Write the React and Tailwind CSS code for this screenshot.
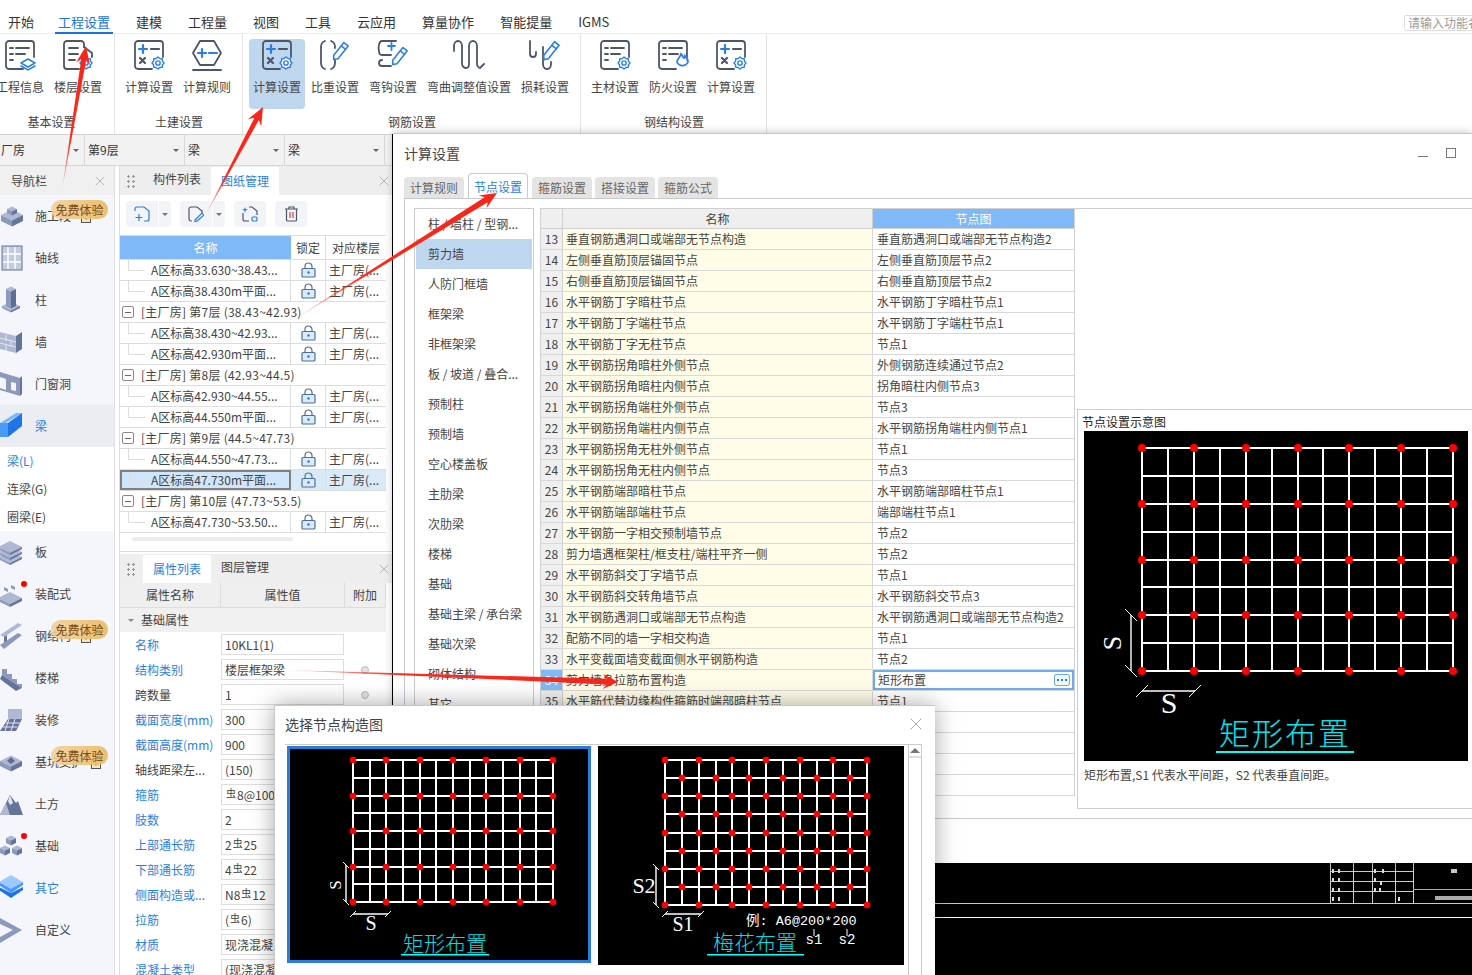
import { X } from "lucide-react";

const SLATE = "#4d5669";
const BLUE = "#2b7fe3";

const topTabs = ["工程设置", "建模", "工程量", "视图", "工具", "云应用", "算量协作", "智能提量", "IGMS"];

function gearPoints(x, y, r) {
  const pts = [];
  for (let i = 0; i < 16; i++) {
    const rad = i % 2 === 0 ? r : r * 0.8;
    const a = (i * Math.PI) / 8;
    pts.push(`${(x + rad * Math.cos(a)).toFixed(2)},${(y + rad * Math.sin(a)).toFixed(2)}`);
  }
  return pts.join(" ");
}

function Gear({ x, y, r = 5 }) {
  return (
    <g stroke={BLUE} fill="#fff" strokeWidth="1.4" strokeLinejoin="round">
      <polygon points={gearPoints(x, y, r)} />
      <circle cx={x} cy={y} r={r * 0.36} />
    </g>
  );
}

function CalcIcon() {
  return (
    <svg width="32" height="32" viewBox="0 0 32 32" fill="none" strokeLinecap="round">
      <path d="M19 30H5a3 3 0 0 1-3-3V5a3 3 0 0 1 3-3h22a3 3 0 0 1 3 3v13" stroke={SLATE} strokeWidth="1.8" />
      <path d="M6 10h8M10 6v8" stroke={BLUE} strokeWidth="2.2" />
      <path d="M18 10h8" stroke={SLATE} strokeWidth="2.2" />
      <path d="M7 19l5 5M12 19l-5 5" stroke={SLATE} strokeWidth="2.2" />
      <Gear x={25} y={24} r={6} />
    </svg>
  );
}

function RuleIcon() {
  return (
    <svg width="32" height="32" viewBox="0 0 32 32" fill="none" strokeLinecap="round">
      <path d="M9 2h14l7 12-7 12H9L2 14z" stroke={SLATE} strokeWidth="1.8" strokeLinejoin="round" />
      <path d="M7 14h8M11 10v8" stroke={BLUE} strokeWidth="2.2" />
      <path d="M18 14h8" stroke={BLUE} strokeWidth="2.2" />
      <path d="M2 31h28" stroke={SLATE} strokeWidth="1.8" />
    </svg>
  );
}

function DocLines() {
  return (
    <>
      <path d="M19 30H5a3 3 0 0 1-3-3V5a3 3 0 0 1 3-3h22a3 3 0 0 1 3 3v13" stroke={SLATE} strokeWidth="1.8" />
      <path d="M6 9h3M12 9h13M6 15h3M12 15h9M6 21h3" stroke={SLATE} strokeWidth="1.8" />
    </>
  );
}

function InfoIcon() {
  return (
    <svg width="32" height="32" viewBox="0 0 32 32" fill="none" strokeLinecap="round">
      <DocLines />
      <path d="M17 24l7-4 7 4-7 4z" fill="#fff" stroke={BLUE} strokeWidth="1.5" strokeLinejoin="round" />
      <path d="M17 27l7 4 7-4" stroke={BLUE} strokeWidth="1.5" />
    </svg>
  );
}

function FloorIcon() {
  return (
    <svg width="32" height="32" viewBox="0 0 32 32" fill="none" strokeLinecap="round">
      <path d="M22 8V5a3 3 0 0 0-3-3H5a3 3 0 0 0-3 3v22a3 3 0 0 0 3 3h12" stroke={SLATE} strokeWidth="1.8" />
      <path d="M7 9h9M7 15h9M7 21h6" stroke={SLATE} strokeWidth="1.8" />
      <path d="M22 8l8 6v4" stroke={SLATE} strokeWidth="1.8" />
      <Gear x={24} y={24} r={6} />
    </svg>
  );
}

function MaterialIcon() {
  return (
    <svg width="32" height="32" viewBox="0 0 32 32" fill="none" strokeLinecap="round">
      <DocLines />
      <Gear x={25} y={24} r={6} />
    </svg>
  );
}

function FireIcon() {
  return (
    <svg width="32" height="32" viewBox="0 0 32 32" fill="none" strokeLinecap="round">
      <DocLines />
      <path d="M20 23c0-3 3-4 4-8 2 2 2 4 3 4 1-1 1-2 1-2 2 2 3 4 3 6a6 6 0 0 1-11 0z" stroke={BLUE} strokeWidth="1.8" fill="#fff" />
    </svg>
  );
}

function Pencil({ dx = 0, dy = 0, s = 1 }) {
  return (
    <g transform={`translate(${dx} ${dy}) scale(${s})`} stroke={BLUE} strokeWidth="1.8" fill="none" strokeLinejoin="round">
      <path d="M2 18l12-15 5 4L7 22l-5 1z" />
      <path d="M11 7l5 4" />
    </g>
  );
}

function WeightIcon() {
  return (
    <svg width="32" height="32" viewBox="0 0 32 32" fill="none" strokeLinecap="round">
      <path d="M6 2C3 3 2 5 2 8v16c0 3 1 5 4 6" stroke={SLATE} strokeWidth="1.8" />
      <path d="M12 2c3 1 4 3 4 6v1M16 21v3c0 3-1 5-4 6" stroke={SLATE} strokeWidth="1.8" />
      <Pencil dx={13} dy={1} s={0.85} />
    </svg>
  );
}

function HookIcon() {
  return (
    <svg width="32" height="32" viewBox="0 0 32 32" fill="none" strokeLinecap="round">
      <path d="M5 2h14M5 16h9M5 2C2 2 1 8 2 12c0 3 1 4 3 4M14 27H5c-2 0-3-1-3-3s1-3 3-3" stroke={SLATE} strokeWidth="1.8" />
      <path d="M11 7h7M14.500 4v7" stroke={BLUE} strokeWidth="1.8" />
      <Pencil dx={14} dy={6} s={0.85} />
    </svg>
  );
}

function BendIcon() {
  return (
    <svg width="32" height="32" viewBox="0 0 32 32" fill="none" strokeLinecap="round">
      <path d="M1 12V7c0-3 2-5 4-5s4 2 4 5v18c0 2 2 4 4 4s3-2 3-4V7c0-3 2-5 4-5s4 2 4 5v18c0 2 2 4 3 4l4-4" stroke={SLATE} strokeWidth="1.8" />
    </svg>
  );
}

function LossIcon() {
  return (
    <svg width="32" height="32" viewBox="0 0 32 32" fill="none" strokeLinecap="round">
      <path d="M1 2v13c0 2 1 3 3 3s3-1 3-3v-2" stroke={SLATE} strokeWidth="1.8" />
      <path d="M14 8v17c0 2 1 5 4 5s4-3 4-5v-2" stroke={SLATE} strokeWidth="1.8" />
      <Pencil dx={13} dy={0} s={0.9} />
    </svg>
  );
}

const ribbon = [
  {
    label: "基本设置",
    width: "w-[115px]",
    inset: "-ml-[9px]",
    labelPad: "pr-[11px]",
    items: [
      { name: "工程信息", Icon: InfoIcon },
      { name: "楼层设置", Icon: FloorIcon },
    ],
  },
  {
    label: "土建设置",
    width: "w-[128px]",
    inset: "ml-[5px]",
    labelPad: "pl-px",
    items: [
      { name: "计算设置", Icon: CalcIcon },
      { name: "计算规则", Icon: RuleIcon },
    ],
  },
  {
    label: "钢筋设置",
    width: "w-[338px]",
    inset: "ml-[5px]",
    labelPad: "pl-px",
    items: [
      { name: "计算设置", Icon: CalcIcon, active: true },
      { name: "比重设置", Icon: WeightIcon },
      { name: "弯钩设置", Icon: HookIcon },
      { name: "弯曲调整值设置", Icon: BendIcon, wide: true },
      { name: "损耗设置", Icon: LossIcon },
    ],
  },
  {
    label: "钢结构设置",
    width: "w-[186px]",
    inset: "ml-[5px]",
    labelPad: "pl-px",
    items: [
      { name: "主材设置", Icon: MaterialIcon },
      { name: "防火设置", Icon: FireIcon },
      { name: "计算设置", Icon: CalcIcon },
    ],
  },
];

function RibbonButton({ item }) {
  const { Icon } = item;
  return (
    <div className={`${item.wide ? "w-[94px]" : "w-[58px]"} px-px`}>
      <div className={`flex h-[70px] flex-col items-center rounded-[4px] ${item.active ? "bg-[#bfd6ef]" : ""}`}>
        <Icon />
        <span className="mt-[7px] whitespace-nowrap text-xs leading-[18px] text-[#444]">{item.name}</span>
      </div>
    </div>
  );
}

function TopBar() {
  return (
    <div className="flex h-[34px] items-end border-b border-[#eee] pl-2 text-[13px] text-[#333]">
      <span className="mr-6 pb-px leading-5">开始</span>
      <div className="flex flex-1 items-end gap-[26px]">
        {topTabs.map((t, i) => (
          <span
            key={t}
            className={
              i === 0
                ? "-mx-[3px] -mb-px border-b-2 border-[#1976e0] px-[3px] leading-5 text-[#1976e0]"
                : "pb-px leading-5"
            }
          >
            {t}
          </span>
        ))}
      </div>
      <div className="mb-[2px] -mr-[22px] h-[16px] w-[90px] shrink-0 overflow-hidden whitespace-nowrap rounded-[2px] border border-[#ddd] pl-[3px] text-xs leading-[14px] text-[#999]">
        请输入功能名称
      </div>
    </div>
  );
}

function Ribbon() {
  return (
    <div className="flex h-[100px] bg-white">
      {ribbon.map((g) => (
        <div key={g.label} className={`${g.width} flex shrink-0 flex-col overflow-hidden border-r border-[#e3e3e3]`}>
          <div className={`mt-[5px] flex ${g.inset}`}>
            {g.items.map((it) => (
              <RibbonButton key={it.name + g.label} item={it} />
            ))}
          </div>
          <div className={`mt-[3px] text-center text-xs leading-[20px] text-[#444] ${g.labelPad}`}>{g.label}</div>
        </div>
      ))}
    </div>
  );
}

function Caret() {
  return <span className="ml-auto mr-[5px] h-0 w-0 border-x-[3px] border-t-[3px] border-x-transparent border-t-[#666]" />;
}

function SelectorBar() {
  const cells = [
    { t: "厂房", w: "w-[85px]", p: "pl-px" },
    { t: "第9层", w: "w-[100px]", p: "pl-[3px]" },
    { t: "梁", w: "w-[100px]", p: "pl-[3px]" },
    { t: "梁", w: "w-[100px]", p: "pl-[3px]" },
  ];
  return (
    <div className="flex h-[32px] shrink-0 border-y border-[#d4d4d4] bg-[#f2f2f2] text-xs text-[#333]">
      {cells.map((c, i) => (
        <div key={i} className={`${c.w} ${c.p} flex items-center border-r border-[#d8d8d8]`}>
          {c.t}
          <Caret />
        </div>
      ))}
    </div>
  );
}

// nav icons, drawn as small isometric blocks
const GREY = ["#aeb8d2", "#8c99bb", "#65749b"];
const AZURE = ["#7db8fb", "#4a98f7", "#1f74e8"];

function cube(cx, cy, s, h, c = GREY) {
  return (
    <g key={`${cx}-${cy}`}>
      <polygon points={`${cx},${cy - s / 2} ${cx + s},${cy} ${cx},${cy + s / 2} ${cx - s},${cy}`} fill={c[0]} />
      <polygon points={`${cx - s},${cy} ${cx},${cy + s / 2} ${cx},${cy + s / 2 + h} ${cx - s},${cy + h}`} fill={c[1]} />
      <polygon points={`${cx + s},${cy} ${cx},${cy + s / 2} ${cx},${cy + s / 2 + h} ${cx + s},${cy + h}`} fill={c[2]} />
    </g>
  );
}

const navIcons = {
  block: () => (
    <>
      {cube(10, 14, 11, 6)}
      {cube(10, 8, 5, 4)}
    </>
  ),
  grid: () => (
    <>
      <rect x="0" y="3" width="20" height="24" fill="#c3cbe0" stroke="#65749b" strokeWidth="1" />
      <path d="M6 4v22M13 4v22M1 11h18M1 19h18" stroke="#fff" strokeWidth="1.4" />
    </>
  ),
  column: () => (
    <>
      {cube(9, 21, 9, 2)}
      {cube(9, 4, 5, 17, ["#aeb8d2", "#8c99bb", "#5d6d96"])}
    </>
  ),
  wall: () => (
    <>
      <polygon points="-2,5 14,9 14,26 -2,22" fill="#aeb8d2" />
      <polygon points="14,9 20,5 20,22 14,26" fill="#65749b" />
      <path d="M-2 11l16 4M-2 16l16 4M4 8v6M9 14v6M4 18v6" stroke="#e2e6f0" strokeWidth="1" />
    </>
  ),
  door: () => (
    <>
      <polygon points="-2,3 18,9 18,27 -2,21" fill="#8c99bb" />
      <polygon points="18,9 20,7 20,25 18,27" fill="#65749b" />
      <polygon points="-2,8 4,10 4,21 -2,19" fill="#f3f5fa" />
      <polygon points="9,13 14,14 14,22 9,21" fill="#f3f5fa" />
    </>
  ),
  beam: () => (
    <>
      <polygon points="-2,12 14,2 20,2 4,12" fill={AZURE[0]} />
      <polygon points="-2,12 6,12 6,26 -2,26" fill={AZURE[1]} />
      <polygon points="6,12 20,2 20,15 6,26" fill={AZURE[2]} />
    </>
  ),
  slab: () => (
    <>
      {cube(8, 20, 12, 2)}
      {cube(8, 15, 12, 2)}
      {cube(8, 10, 12, 2)}
    </>
  ),
  precast: () => (
    <>
      {cube(8, 19, 12, 3)}
      <polygon points="2,8 6,10 6,13 2,11" fill="#8c99bb" />
      <polygon points="9,6 13,8 13,11 9,9" fill="#8c99bb" />
    </>
  ),
  steel: () => (
    <>
      <polygon points="-2,14 16,2 20,4 2,16" fill="#aeb8d2" />
      <polygon points="2,16 5,14 5,24 2,26" fill="#65749b" />
      <polygon points="-2,24 16,12 20,14 2,28" fill="#8c99bb" />
    </>
  ),
  stairs: () => (
    <>
      <polygon points="0,6 5,6 5,11 10,11 10,16 15,16 15,21 20,21 20,25 0,12" fill="#8c99bb" />
      <polygon points="0,12 20,25 14,28 -2,16" fill="#65749b" />
    </>
  ),
  deco: () => (
    <>
      <polygon points="6,4 20,4 20,14 6,14" fill="#aeb8d2" />
      <polygon points="6,14 20,14 14,26 -2,26" fill="#65749b" />
      <path d="M4 18h14M1 22h14M7 14l-4 12M13 14l-4 12" stroke="#e2e6f0" strokeWidth="1" />
    </>
  ),
  pit: () => (
    <>
      {cube(9, 14, 11, 5)}
      <polygon points="9,10 13,14 9,17 5,14" fill="#5d6d96" />
    </>
  ),
  earth: () => (
    <>
      <polygon points="-2,26 8,6 14,14 16,12 21,26" fill="#65749b" />
      <polygon points="-2,26 4,14 8,26" fill="#aeb8d2" />
      <polygon points="8,6 11,14 8,16 6,12" fill="#e2e6f0" />
    </>
  ),
  cubes: () => (
    <>
      {cube(9, 7, 5, 5)}
      {cube(3, 17, 5, 5)}
      {cube(15, 17, 5, 5)}
    </>
  ),
  layers: () => (
    <>
      <polygon points="9,20 21,14 21,17 9,25 -3,17 -3,14" fill="#1f74e8" />
      <polygon points="9,15 21,9 21,12 9,20 -3,12 -3,9" fill="#4a98f7" />
      <polygon points="9,2 21,9 9,16 -3,9" fill="#9ccafc" />
    </>
  ),
  custom: () => (
    <>
      <polygon points="-2,3 20,15 -2,28" fill="#8c99bb" />
      <polygon points="-2,9 11,15 -2,22" fill="#f3f5fa" />
    </>
  ),
};

const navRows = [
  { t: "施工段", i: "block", badge: true, lock: 85 },
  { t: "轴线", i: "grid" },
  { t: "柱", i: "column" },
  { t: "墙", i: "wall" },
  { t: "门窗洞", i: "door" },
  { t: "梁", i: "beam", active: true },
  { sub: true },
  { t: "板", i: "slab" },
  { t: "装配式", i: "precast", dot: true },
  { t: "钢结构", i: "steel", badge: true, lock: 85 },
  { t: "楼梯", i: "stairs" },
  { t: "装修", i: "deco" },
  { t: "基坑支护", i: "pit", badge: true, lock: 96 },
  { t: "土方", i: "earth" },
  { t: "基础", i: "cubes", dot: true },
  { t: "其它", i: "layers", blue: true },
  { t: "自定义", i: "custom" },
];

function CloseX() {
  return <X size={16} strokeWidth={1.2} className="text-[#aaa]" />;
}

function TrialBadge({ lock }) {
  return (
    <>
      <svg
        width="10"
        height="11"
        viewBox="0 0 10 11"
        className={`absolute top-[17px] ${lock === 85 ? "left-[81px]" : "left-[91px]"}`}
      >
        <rect x="0.5" y="2.500" width="9" height="8" fill="#f4e6c4" stroke="#555" />
        <circle cx="5" cy="6.500" r="1" fill="#555" />
      </svg>
      <div className="absolute left-[51px] top-[5px] h-[19px] w-[57px] rounded-full bg-gradient-to-r from-[#f3d09b]/90 to-[#e9b95f]/90 text-center text-xs leading-[19px] text-[#7a4b12]">
        免费体验
      </div>
    </>
  );
}

function NavBar() {
  return (
    <div className="flex w-[115px] shrink-0 flex-col border-r border-[#e2e2e2] bg-[#f4f6fb] text-xs">
      <div className="flex h-[29px] shrink-0 items-center justify-between bg-[#f0f0f0] pl-[11px] pr-[6px] text-[#444]">
        导航栏
        <CloseX />
      </div>
      {navRows.map((r, idx) => {
        if (r.sub) {
          return (
            <div key={idx} className="flex flex-col bg-white pl-[7px]">
              <span className="leading-[28px] text-[#2b7fe3]">梁(L)</span>
              <span className="leading-[28px] text-[#444]">连梁(G)</span>
              <span className="leading-[28px] text-[#444]">圈梁(E)</span>
            </div>
          );
        }
        const Ico = navIcons[r.i];
        return (
          <div key={idx} className={`relative flex h-[42px] shrink-0 items-center ${r.active ? "bg-[#ecedf2]" : ""}`}>
            <svg width="24" height="30" viewBox="-2 0 24 30" className="shrink-0 overflow-visible">
              <Ico />
            </svg>
            <span className={`ml-[11px] ${r.active || r.blue ? "text-[#2b7fe3]" : "text-[#444]"}`}>{r.t}</span>
            {r.dot && <span className="absolute left-[21px] top-[8px] h-[6px] w-[6px] rounded-full bg-[#f00]" />}
            {r.badge && <TrialBadge lock={r.lock} />}
          </div>
        );
      })}
    </div>
  );
}

function LockIcon() {
  return (
    <svg width="15" height="16" viewBox="0 0 15 16" fill="none">
      <path d="M4 7V4.500a3.500 3.500 0 0 1 7 0V7" stroke="#5d6d85" strokeWidth="1.2" />
      <rect x="1" y="6.500" width="13" height="8.500" rx="1" fill="#dcebfa" stroke="#4a6f9e" strokeWidth="1.2" />
      <circle cx="7.500" cy="10.500" r="1.300" fill="#2b7fe3" />
    </svg>
  );
}

const treeRows = [
  { n: "A区标高33.630~38.43..." },
  { n: "A区标高38.430m平面..." },
  { g: "[主厂房] 第7层 (38.43~42.93)" },
  { n: "A区标高38.430~42.93..." },
  { n: "A区标高42.930m平面..." },
  { g: "[主厂房] 第8层 (42.93~44.5)" },
  { n: "A区标高42.930~44.55..." },
  { n: "A区标高44.550m平面..." },
  { g: "[主厂房] 第9层 (44.5~47.73)" },
  { n: "A区标高44.550~47.73..." },
  { n: "A区标高47.730m平面...", sel: true },
  { g: "[主厂房] 第10层 (47.73~53.5)" },
  { n: "A区标高47.730~53.50..." },
];

function ToolBtn({ children, split }) {
  return (
    <div className="flex h-[26px] items-center rounded-[4px] bg-[#f3f4f8]">
      <div className="flex w-[32px] items-center justify-center">{children}</div>
      {split && (
        <div className="flex h-full w-[13px] items-center justify-center border-l border-white">
          <span className="h-0 w-0 border-x-[3px] border-t-[3px] border-x-transparent border-t-[#777]" />
        </div>
      )}
    </div>
  );
}

function TreeRow({ row }) {
  if (row.g) {
    return (
      <div className="flex h-[21px] items-center whitespace-nowrap border-b border-[#ddd] pl-[2px] text-xs tracking-[0.25px] text-[#444]">
        <span className="mr-[7px] flex h-[12px] w-[12px] items-center justify-center rounded-[2px] border border-[#888]">
          <span className="h-px w-[6px] bg-[#666]" />
        </span>
        {row.g}
      </div>
    );
  }
  return (
    <div className={`flex h-[21px] border-b border-[#ddd] text-xs text-[#444] ${row.sel ? "bg-[#d9e9f8]" : ""}`}>
      <div className={`relative w-[171px] shrink-0 truncate ${row.sel ? "border-2 border-[#808080] bg-[#cfe5fb] pl-[29px] leading-[15px]" : "border-r border-[#ddd] pl-[31px] leading-[20px]"}`}>
        <span className="absolute left-[8px] top-0 h-[11px] w-[17px] border-b border-l border-[#ddd]" />
        {row.n}
      </div>
      <div className="flex w-[35px] shrink-0 items-center justify-center border-r border-[#ddd]">
        <LockIcon />
      </div>
      <div className="flex-1 truncate pl-[3px] leading-[20px]">主厂房(...</div>
    </div>
  );
}

function DragDots() {
  return <span className="mb-[6px] ml-[6px] h-[15px] w-[10px] bg-[radial-gradient(circle,#999_1.1px,transparent_1.3px)] bg-[length:5px_5px]" />;
}

function ComponentPanel() {
  return (
    <div className="flex h-[386px] shrink-0 flex-col border-b border-[#ddd] bg-white">
      <div className="flex h-[29px] shrink-0 items-end bg-[#eee] text-xs">
        <DragDots />
        <span className="ml-[17px] pb-[6px] leading-5 text-[#444]">构件列表</span>
        <span className="ml-[10px] flex h-[28px] w-[68px] items-center justify-center bg-white text-[#2b7fe3]">图纸管理</span>
        <span className="mb-[6px] ml-auto">
          <CloseX />
        </span>
      </div>
      <div className="flex h-[40px] shrink-0 items-start gap-[9px] pl-[6px] pt-[6px]">
        <ToolBtn split>
          <svg width="16" height="16" viewBox="0 0 16 16" fill="none" stroke="#2b7fe3" strokeWidth="1.2">
            <path d="M1 5V3a2 2 0 0 1 2-2h7l5 4v8a2 2 0 0 1-2 2h-3" />
            <path d="M5 8v7M1.500 11.500h7" />
          </svg>
        </ToolBtn>
        <ToolBtn split>
          <svg width="16" height="16" viewBox="0 0 16 16" fill="none" stroke={SLATE} strokeWidth="1.2">
            <path d="M4 15H3a2 2 0 0 1-2-2V3a2 2 0 0 1 2-2h6l5 4v2" />
            <path d="M7 14l7-7 2 2-7 6-2 1z" stroke="#2b7fe3" />
          </svg>
        </ToolBtn>
        <ToolBtn>
          <svg width="16" height="16" viewBox="0 0 16 16" fill="none" stroke={SLATE} strokeWidth="1.2">
            <path d="M1 7v6a2 2 0 0 0 2 2h4M7 1h3l5 4v4" />
            <path d="M3 1l.7 2L6 3.700 3.700 4.500 3 7 2.300 4.500 0 3.700 2.300 3z" fill="#2b7fe3" stroke="none" />
            <rect x="10" y="11" width="5" height="4" rx="1" stroke="#2b7fe3" />
          </svg>
        </ToolBtn>
        <ToolBtn>
          <svg width="15" height="16" viewBox="0 0 15 16" fill="none" stroke={SLATE} strokeWidth="1.2">
            <path d="M1 3h13M5 3V1h5v2M2.500 3v11a1 1 0 0 0 1 1h8a1 1 0 0 0 1-1V3" />
            <path d="M6 6v6M9 6v6" stroke="#d9453d" />
          </svg>
        </ToolBtn>
      </div>
      <div className="flex h-[25px] w-[266px] shrink-0 border-y border-[#ddd] text-xs text-[#444]">
        <div className="flex w-[171px] items-center justify-center bg-[#7fb9f7] text-white">名称</div>
        <div className="flex w-[35px] items-center justify-center border-r border-[#ddd]">锁定</div>
        <div className="flex flex-1 items-center justify-center">对应楼层</div>
      </div>
      <div className="w-[266px] shrink-0">
        {treeRows.map((r, i) => (
          <TreeRow key={i} row={r} />
        ))}
      </div>
      <div className="ml-[12px] mt-[4px] h-[4px] w-[161px] shrink-0 rounded-full bg-[#ececec]" />
    </div>
  );
}

const props = [
  { k: "名称", v: "10KL1(1)", b: true },
  { k: "结构类别", v: "楼层框架梁", b: true, dot: true },
  { k: "跨数量", v: "1", dot: true },
  { k: "截面宽度(mm)", v: "300", b: true },
  { k: "截面高度(mm)", v: "900", b: true },
  { k: "轴线距梁左...", v: "(150)" },
  { k: "箍筋", v: ["", "8@100"], b: true },
  { k: "肢数", v: "2", b: true },
  { k: "上部通长筋", v: ["2", "25"], b: true },
  { k: "下部通长筋", v: ["4", "22"], b: true },
  { k: "侧面构造或...", v: ["N8", "12"], b: true },
  { k: "拉筋", v: ["(", "6)"], b: true },
  { k: "材质", v: "现浇混凝土", b: true },
  { k: "混凝土类型", v: "(现浇混凝土)", b: true },
];

function PropValue({ v }) {
  if (Array.isArray(v)) {
    return (
      <>
        {v[0]}
        <span className="relative -top-[2px] mx-px text-[10px]">虫</span>
        {v[1]}
      </>
    );
  }
  return v;
}

function PropertyPanel() {
  return (
    <div className="mt-[2px] flex min-h-0 flex-1 flex-col overflow-hidden bg-white text-xs">
      <div className="flex h-[29px] shrink-0 items-end bg-[#eee]">
        <DragDots />
        <span className="ml-[7px] flex h-[28px] w-[68px] items-center justify-center bg-white text-[#2b7fe3]">属性列表</span>
        <span className="ml-[10px] pb-[6px] leading-5 text-[#444]">图层管理</span>
        <span className="mb-[6px] ml-auto">
          <CloseX />
        </span>
      </div>
      <div className="flex h-[25px] w-[266px] shrink-0 border-b border-[#ddd] bg-[#efefef] text-[#444]">
        <div className="flex w-[101px] items-center justify-center border-r border-[#ddd]">属性名称</div>
        <div className="flex w-[124px] items-center justify-center border-r border-[#ddd]">属性值</div>
        <div className="flex flex-1 items-center justify-center border-r border-[#ddd]">附加</div>
      </div>
      <div className="flex h-[24px] w-[266px] shrink-0 items-center bg-[#f0f0f0] pl-[8px] text-[#444]">
        <span className="mr-[7px] h-0 w-0 border-x-[3px] border-t-[3px] border-x-transparent border-t-[#888]" />
        基础属性
      </div>
      {props.map((p) => (
        <div key={p.k} className="flex h-[25px] shrink-0 items-center">
          <span className={`w-[101px] truncate pl-[15px] ${p.b ? "text-[#2b7fe3]" : "text-[#444]"}`}>{p.k}</span>
          <div className="flex h-[21px] w-[123px] items-center overflow-hidden whitespace-nowrap border border-[#ddd] pl-[3px] text-[#444]">
            <PropValue v={p.v} />
          </div>
          {p.dot && <span className="ml-[17px] h-[8px] w-[8px] rounded-full border border-[#bbb] bg-[#e2e2e2]" />}
        </div>
      ))}
    </div>
  );
}

// rebar drawing shared by the preview and the picker
function range(a, b, n) {
  return Array.from({ length: n + 1 }, (_, i) => Math.round(a + ((b - a) * i) / n));
}

function RebarGrid({ x0, x1, y0, y1, stagger, sw = 2, r = 3 }) {
  const xs = range(x0, x1, 12);
  const ys = range(y0, y1, 8);
  return (
    <>
      {xs.map((x) => (
        <line key={x} x1={x} x2={x} y1={y0} y2={y1} stroke="#fff" strokeWidth={sw} shapeRendering="crispEdges" />
      ))}
      {ys.map((y) => (
        <line key={y} x1={x0} x2={x1} y1={y} y2={y} stroke="#fff" strokeWidth={sw} shapeRendering="crispEdges" />
      ))}
      {ys.map((y, j) =>
        xs.map((x, i) => {
          const on = j % 2 === 0 ? i % 2 === 0 : stagger && i % 2 === 1;
          return on ? <circle key={`${i}-${j}`} cx={x} cy={y} r={r} fill="#f00" /> : null;
        })
      )}
    </>
  );
}

function DimV({ x, y0, y1, t = 5 }) {
  return (
    <g stroke="#fff" strokeWidth="1">
      <line x1={x} x2={x} y1={y0} y2={y1} strokeWidth="1.400" />
      <line x1={x - t} x2={x + t} y1={y0 - t} y2={y0 + t} />
      <line x1={x - t} x2={x + t} y1={y1 - t} y2={y1 + t} />
    </g>
  );
}

function DimH({ y, x0, x1, t = 5 }) {
  return (
    <g stroke="#fff" strokeWidth="1">
      <line x1={x0} x2={x1} y1={y} y2={y} strokeWidth="1.400" />
      <line x1={x0 - t} x2={x0 + t} y1={y + t} y2={y - t} />
      <line x1={x1 - t} x2={x1 + t} y1={y + t} y2={y - t} />
    </g>
  );
}

const serif = "'Liberation Serif',serif";
const cjk = "'Noto Sans CJK SC',sans-serif";
const mono = "'Liberation Mono','Noto Sans CJK SC',monospace";

function PreviewPlate() {
  return (
    <svg width="384" height="330" viewBox="0 0 384 330" className="block bg-black">
      <RebarGrid x0={58} x1={369} y0={17} y1={240} r={4} />
      <DimV x={47} y0={184} y1={240} t={6} />
      <DimH y={260} x0={58} x1={111} t={6} />
      <text x="28" y="212" fill="#fff" fontFamily={serif} fontSize="26" textAnchor="middle" transform="rotate(-90 28 212) translate(0 9)">S</text>
      <text x="85" y="282" fill="#fff" fontFamily={serif} fontSize="30" textAnchor="middle">S</text>
      <text x="201" y="314" fill="#00e5ee" fontFamily={cjk} fontWeight="300" fontSize="31" letterSpacing="2" textAnchor="middle">矩形布置</text>
      <rect x="132" y="320" width="138" height="2" fill="#0ff" />
    </svg>
  );
}

function RectPlate() {
  return (
    <svg width="304" height="217" viewBox="0 0 304 217" className="block bg-black outline-[3px] -outline-offset-[3px] outline-[#2b7ddc]">
      <RebarGrid x0={66} x1={266} y0={14} y1={156} r={3.300} />
      <DimV x={59} y0={119} y1={156} t={3} />
      <DimH y={168} x0={66} x1={101} t={3} />
      <text x="48" y="139" fill="#fff" fontFamily={serif} fontSize="17" textAnchor="middle" transform="rotate(-90 48 139) translate(0 6)">S</text>
      <text x="84" y="184" fill="#fff" fontFamily={serif} fontSize="20" textAnchor="middle">S</text>
      <text x="158" y="205" fill="#00dfe8" fontFamily={cjk} fontWeight="300" fontSize="21" textAnchor="middle">矩形布置</text>
      <rect x="114" y="208" width="88" height="1.500" fill="#0ff" />
    </svg>
  );
}

function QuincunxPlate() {
  return (
    <svg width="306" height="219" viewBox="0 0 306 219" className="block bg-black">
      <RebarGrid x0={67} x1={269} y0={14} y1={159} stagger r={3.300} />
      <DimV x={58} y0={121} y1={159} t={3} />
      <DimH y={168} x0={67} x1={103} t={3} />
      <text x="46" y="147" fill="#fff" fontFamily={serif} fontSize="22" textAnchor="middle">S2</text>
      <text x="85" y="185" fill="#fff" fontFamily={serif} fontSize="20" textAnchor="middle">S1</text>
      <text x="148" y="179" fill="#fff" fontFamily={mono} fontSize="13.500">例: A6@200*200</text>
      <path d="M216 183v7M249 183v7" stroke="#fff" />
      <text x="216" y="198" fill="#fff" fontFamily={mono} fontSize="14" textAnchor="middle">s1</text>
      <text x="249" y="198" fill="#fff" fontFamily={mono} fontSize="14" textAnchor="middle">s2</text>
      <text x="157" y="204" fill="#00dfe8" fontFamily={cjk} fontWeight="300" fontSize="21" textAnchor="middle">梅花布置</text>
      <rect x="109" y="208" width="97" height="1.500" fill="#0ff" />
    </svg>
  );
}

const calcTabs = ["计算规则", "节点设置", "箍筋设置", "搭接设置", "箍筋公式"];

const sideList = [
  "柱 / 墙柱 / 型钢...",
  "剪力墙",
  "人防门框墙",
  "框架梁",
  "非框架梁",
  "板 / 坡道 / 叠合...",
  "预制柱",
  "预制墙",
  "空心楼盖板",
  "主肋梁",
  "次肋梁",
  "楼梯",
  "基础",
  "基础主梁 / 承台梁",
  "基础次梁",
  "砌体结构",
  "其它",
];

const nodeRows = [
  [13, "垂直钢筋遇洞口或端部无节点构造", "垂直筋遇洞口或端部无节点构造2"],
  [14, "左侧垂直筋顶层锚固节点", "左侧垂直筋顶层节点2"],
  [15, "右侧垂直筋顶层锚固节点", "右侧垂直筋顶层节点2"],
  [16, "水平钢筋丁字暗柱节点", "水平钢筋丁字暗柱节点1"],
  [17, "水平钢筋丁字端柱节点", "水平钢筋丁字端柱节点1"],
  [18, "水平钢筋丁字无柱节点", "节点1"],
  [19, "水平钢筋拐角暗柱外侧节点", "外侧钢筋连续通过节点2"],
  [20, "水平钢筋拐角暗柱内侧节点", "拐角暗柱内侧节点3"],
  [21, "水平钢筋拐角端柱外侧节点", "节点3"],
  [22, "水平钢筋拐角端柱内侧节点", "水平钢筋拐角端柱内侧节点1"],
  [23, "水平钢筋拐角无柱外侧节点", "节点1"],
  [24, "水平钢筋拐角无柱内侧节点", "节点3"],
  [25, "水平钢筋端部暗柱节点", "水平钢筋端部暗柱节点1"],
  [26, "水平钢筋端部端柱节点", "端部端柱节点1"],
  [27, "水平钢筋一字相交预制墙节点", "节点2"],
  [28, "剪力墙遇框架柱/框支柱/端柱平齐一侧", "节点2"],
  [29, "水平钢筋斜交丁字墙节点", "节点1"],
  [30, "水平钢筋斜交转角墙节点", "水平钢筋斜交节点3"],
  [31, "水平钢筋遇洞口或端部无节点构造", "水平钢筋遇洞口或端部无节点构造2"],
  [32, "配筋不同的墙一字相交构造", "节点1"],
  [33, "水平变截面墙变截面侧水平钢筋构造", "节点2"],
  [34, "剪力墙身拉筋布置构造", "矩形布置"],
  [35, "水平筋代替边缘构件箍筋时端部暗柱节点", "节点1"],
];

function NodeTable() {
  return (
    <div className="mt-[9px] h-[588px] w-[535px] shrink-0 border border-[#d0d0d0] text-xs text-[#444]">
      <div className="flex h-[20px] border-b border-[#d0d0d0]">
        <div className="w-[22px] border-r border-[#d0d0d0] bg-[#efefef]" />
        <div className="flex w-[310px] items-center justify-center border-r border-[#d0d0d0] bg-[#efefef]">名称</div>
        <div className="flex flex-1 items-center justify-center bg-[#7fb9f7] text-white">节点图</div>
      </div>
      {nodeRows.map(([no, name, node]) => {
        const sel = no === 34;
        return (
          <div key={no} className="flex h-[21px] border-b border-[#d8d8d8] leading-[20px]">
            <div className={`w-[22px] shrink-0 border-r border-[#d0d0d0] text-center ${sel ? "bg-[#7fb9f7] text-white" : "bg-[#efefef]"}`}>{no}</div>
            <div className="w-[310px] shrink-0 truncate border-r border-[#d8d8d8] bg-[#fffde8] pl-[3px]">{name}</div>
            {sel ? (
              <div className="flex flex-1 items-center justify-between border-2 border-[#6cace8] pl-[3px] pr-[2px] leading-[16px]">
                {node}
                <span className="flex h-[12px] w-[16px] items-center justify-center gap-[2px] rounded-[2px] border border-[#6cace8] bg-[#eef5fd]">
                  <span className="h-[2px] w-[2px] bg-[#2b7fe3]" />
                  <span className="h-[2px] w-[2px] bg-[#2b7fe3]" />
                  <span className="h-[2px] w-[2px] bg-[#2b7fe3]" />
                </span>
              </div>
            ) : (
              <div className="flex-1 truncate pl-[4px]">{node}</div>
            )}
          </div>
        );
      })}
      {[0, 1, 2, 3].map((i) => (
        <div key={i} className="h-[21px] border-b border-[#d8d8d8]" />
      ))}
    </div>
  );
}

function CalcWindow() {
  return (
    <div className="absolute left-[393px] top-[133px] flex h-[730px] w-[1079px] flex-col border-t border-[#c8c8c8] bg-white pl-[11px] text-xs shadow-[0_0_8px_rgba(0,0,0,0.25)]">
      <div className="flex h-[41px] shrink-0 items-center justify-between pb-[4px] text-sm text-[#444]">
        计算设置
        <div className="mr-[16px] flex items-center gap-[18px]">
          <span className="mt-[8px] h-px w-[10px] bg-[#777]" />
          <span className="h-[10px] w-[10px] border border-[#777]" />
        </div>
      </div>
      <div className="flex h-[23px] shrink-0 items-end gap-[3px]">
        {calcTabs.map((t) =>
          t === "节点设置" ? (
            <span key={t} className="-mb-px ml-px mr-px flex h-[26px] w-[60px] items-center justify-center rounded-t-[4px] border border-b-0 border-[#c8c8d0] bg-white text-[#2b7fe3]">
              {t}
            </span>
          ) : (
            <span key={t} className="flex h-[21px] w-[60px] items-center justify-center rounded-t-[4px] bg-[#e4e4e4] text-[#666]">
              {t}
            </span>
          )
        )}
      </div>
      <div className="flex h-[621px] shrink-0 border-y border-l border-[#c8c8d0]">
        <div className="ml-[9px] mr-[6px] mt-[9px] flex w-[120px] shrink-0 flex-col overflow-hidden border border-[#ccc] px-px text-[#444]">
          {sideList.map((s) => (
            <div key={s} className={`h-[30px] shrink-0 pl-[12px] leading-[30px] ${s === "剪力墙" ? "bg-[#bfd6ef]" : ""}`}>
              {s}
            </div>
          ))}
        </div>
        <NodeTable />
        <div className="mt-[9px] flex-1 border-t border-[#ccc]">
          <div className="ml-[2px] mt-[200px] h-[400px] border-y border-l border-[#ccc] pl-[6px]">
            <div className="-ml-[2px] h-[21px] pt-[4px] leading-[16px] text-[#222]">节点设置示意图</div>
            <PreviewPlate />
            <div className="mt-[6px] text-[#444]">矩形布置,S1 代表水平间距，S2 代表垂直间距。</div>
          </div>
        </div>
      </div>
    </div>
  );
}

function PickerWindow() {
  return (
    <div className="absolute left-[274px] top-[705px] flex h-[270px] w-[661px] flex-col border-l border-t border-[#c8c8c8] bg-white pl-[10px] shadow-[0_0_22px_rgba(0,0,0,0.35)]">
      <div className="flex h-[38px] shrink-0 items-center justify-between pb-[3px] text-sm text-[#444]">
        选择节点构造图
        <X size={20} strokeWidth={1} className="mr-[9px] text-[#999]" />
      </div>
      <div className="flex h-[232px] w-[637px] border-t border-[#ccc]">
        <div className="flex flex-1 gap-[7px] pl-[2px] pt-px">
          <RectPlate />
          <QuincunxPlate />
        </div>
        <div className="flex w-[14px] shrink-0 flex-col border-x border-[#ccc]">
          <div className="flex h-[13px] items-center justify-center border-b-2 border-[#ddd]">
            <span className="h-0 w-0 border-x-[5px] border-b-[5px] border-x-transparent border-b-[#777]" />
          </div>
        </div>
      </div>
    </div>
  );
}

function CadTitleBlock() {
  const rows = [862, 871, 881, 891, 903];
  const marks = [
    [1332, 872], [1338, 872], [1332, 881], [1338, 881], [1332, 891], [1338, 891], [1332, 900], [1338, 900],
    [1374, 872], [1382, 872], [1374, 881], [1380, 884], [1374, 891], [1379, 891], [1398, 900],
  ];
  return (
    <svg width="1472" height="112" viewBox="0 863 1472 112" className="block">
      <path d="M935 903.500H1472" stroke="#c8c8c8" />
      <path d="M935 917.500H1472" stroke="#fff" />
      {rows.map((y) => (
        <line key={y} x1="1330" x2="1413" y1={y + 0.5} y2={y + 0.5} stroke="#ccc" />
      ))}
      {[1330.500, 1353.500, 1372.500, 1395.500, 1413.500].map((x) => (
        <line key={x} x1={x} x2={x} y1="863" y2="903" stroke="#ccc" />
      ))}
      <line x1="1413" x2="1472" y1="889.500" y2="889.500" stroke="#aaa" />
      {marks.map(([x, y]) => (
        <rect key={`${x}-${y}`} x={x} y={y - 3} width="2" height="4" fill="#ddd" />
      ))}
      <rect x="1451" y="869" width="6" height="4" fill="#ccc" />
      <rect x="1435" y="896" width="37" height="4" fill="#aaa" />
    </svg>
  );
}

// annotation arrows, tapering from a thin tail to a solid head
function arrowPoints([tx, ty], [px, py], head, wing, shaft) {
  const len = Math.hypot(px - tx, py - ty);
  const ux = (px - tx) / len;
  const uy = (py - ty) / len;
  const nx = -uy;
  const ny = ux;
  const bx = px - ux * head;
  const by = py - uy * head;
  const sx = px - ux * head * 0.75;
  const sy = py - uy * head * 0.75;
  const pts = [
    [tx, ty],
    [sx + nx * shaft, sy + ny * shaft],
    [bx + nx * wing, by + ny * wing],
    [px, py],
    [bx - nx * wing, by - ny * wing],
    [sx - nx * shaft, sy - ny * shaft],
  ];
  return pts.map((p) => p.join(",")).join(" ");
}

const arrows = [
  { id: "a1", t: [62, 190], p: [86, 46], head: 18, wing: 7, shaft: 2.500 },
  { id: "a2", t: [205, 216], p: [263, 107], head: 18, wing: 7.500, shaft: 2.500 },
  { id: "a3", t: [293, 320], p: [497, 193], head: 17, wing: 7.500, shaft: 3 },
  { id: "a4", t: [283, 670], p: [618, 682], head: 15, wing: 7.500, shaft: 2.800 },
];

function Arrows() {
  return (
    <svg width="1472" height="975" className="pointer-events-none absolute inset-0">
      <defs>
        {arrows.map((a) => (
          <linearGradient key={a.id} id={a.id} gradientUnits="userSpaceOnUse" x1={a.t[0]} y1={a.t[1]} x2={a.p[0]} y2={a.p[1]}>
            <stop offset="0" stopColor="#ff2a1a" stopOpacity="0.15" />
            <stop offset="0.35" stopColor="#ff2a1a" />
            <stop offset="1" stopColor="#f6261a" />
          </linearGradient>
        ))}
      </defs>
      {arrows.map((a) => (
        <polygon key={a.id} points={arrowPoints(a.t, a.p, a.head, a.wing, a.shaft)} fill={`url(#${a.id})`} />
      ))}
    </svg>
  );
}

export default function App() {
  return (
    <div className="relative flex h-[975px] w-[1472px] flex-col overflow-hidden bg-white [font-family:'Noto_Sans_CJK_SC',sans-serif]">
      <TopBar />
      <Ribbon />
      <div className="flex min-h-0 flex-1">
        <div className="flex w-[392px] shrink-0 flex-col">
          <SelectorBar />
          <div className="flex min-h-0 flex-1">
            <NavBar />
            <div className="ml-[4px] flex w-[273px] shrink-0 flex-col border-l border-[#ddd] bg-white">
              <ComponentPanel />
              <PropertyPanel />
            </div>
          </div>
        </div>
        <div className="flex flex-1 flex-col justify-end overflow-hidden bg-black">
          <div className="-ml-[392px]">
            <CadTitleBlock />
          </div>
        </div>
      </div>
      <CalcWindow />
      <PickerWindow />
      <Arrows />
    </div>
  );
}
